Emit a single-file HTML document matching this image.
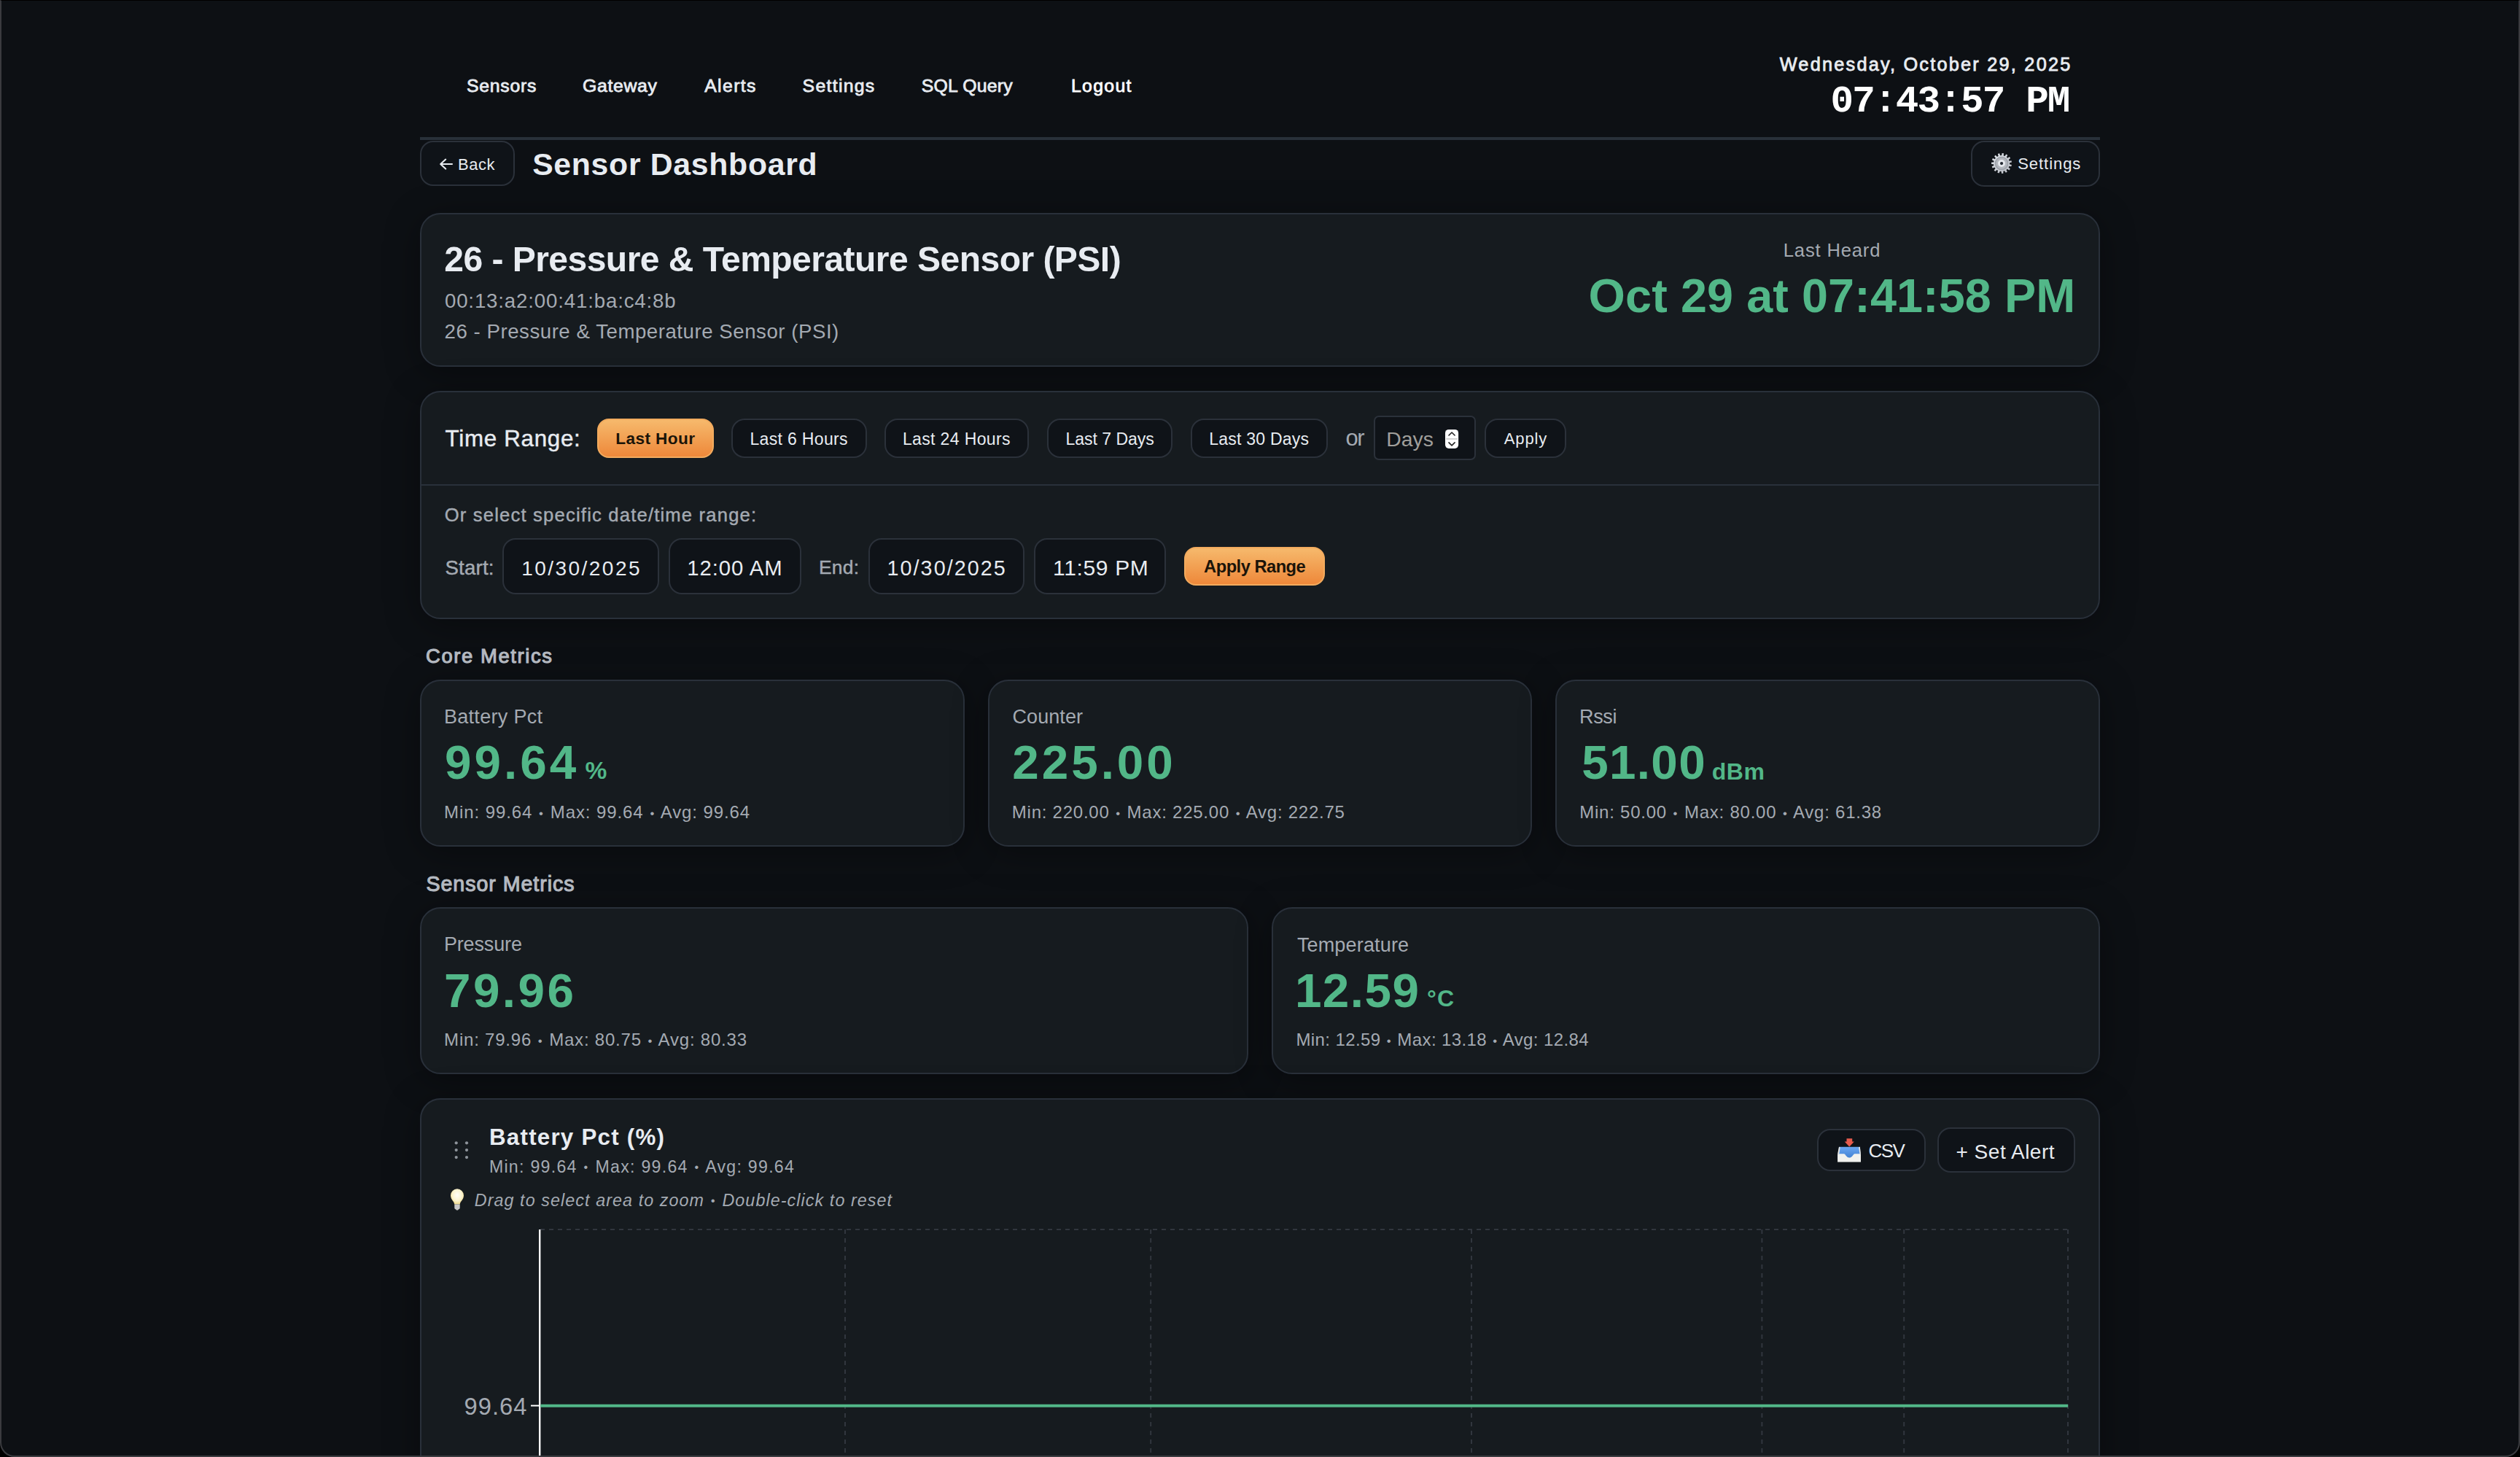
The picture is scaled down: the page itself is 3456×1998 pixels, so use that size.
<!DOCTYPE html>
<html><head><meta charset="utf-8"><title>Sensor Dashboard</title>
<style>
@media (min-width: 2400px) { html { zoom: 2; } }
html, body { margin:0; padding:0; background:#000; }
body { width:1728px; height:999px; overflow:hidden; position:relative; font-family:"Liberation Sans", sans-serif; }
.win { position:absolute; left:0; top:0; width:1728px; height:999px; border-radius:0 0 10px 10px; background:#0d1014; overflow:hidden; }
.frame { position:absolute; left:0; top:0; width:1728px; height:999px; box-sizing:border-box; border:1px solid #3a3b3f; border-top:0.5px solid #000; border-radius:0 0 10px 10px; pointer-events:none; }
.t { position:absolute; line-height:1; white-space:nowrap; }
.card { position:absolute; box-sizing:border-box; background:#161b1f; border:1px solid #29303a; border-radius:14px; box-shadow:0 4px 24px rgba(0,0,0,0.35); }
.btn { position:absolute; box-sizing:border-box; background:#0f1318; border:1px solid #2b313a; border-radius:9px; }
.obtn { position:absolute; box-sizing:border-box; background:linear-gradient(#f6b96c,#ee883a); border:1px solid #f2ab5e; border-radius:8px; }
.inp { position:absolute; box-sizing:border-box; background:#0f1318; border:1px solid #2b313a; border-radius:9px; }
.ab { position:absolute; }
</style></head>
<body><div class="win">
<div class="ab" style="left:288.00px;top:94.00px;width:1152.00px;height:2.00px;background:#283039;"></div>
<div class="btn" style="left:288.00px;top:96.65px;width:64.80px;height:30.70px;"></div>
<div class="btn" style="left:1351.60px;top:96.30px;width:88.30px;height:31.50px;"></div>
<div class="card" style="left:288.00px;top:146.10px;width:1152.00px;height:105.65px;"></div>
<div class="card" style="left:288.00px;top:268.10px;width:1152.00px;height:156.35px;"></div>
<div class="ab" style="left:289.00px;top:332.00px;width:1150.00px;height:1.00px;background:#29303a;"></div>
<div class="obtn" style="left:409.35px;top:287.00px;width:80.35px;height:26.95px;"></div>
<div class="btn" style="left:501.45px;top:287.10px;width:92.85px;height:26.75px;"></div>
<div class="btn" style="left:606.60px;top:287.10px;width:99.15px;height:26.75px;"></div>
<div class="btn" style="left:718.10px;top:287.10px;width:86.05px;height:26.75px;"></div>
<div class="btn" style="left:816.65px;top:287.10px;width:94.05px;height:26.75px;"></div>
<div class="btn" style="left:1018.00px;top:287.10px;width:55.95px;height:26.75px;"></div>
<div class="inp" style="left:942.05px;top:285.15px;width:69.85px;height:30.55px;border-radius:3.5px;"></div>
<div class="inp" style="left:344.65px;top:369.20px;width:107.15px;height:38.50px;"></div>
<div class="inp" style="left:458.25px;top:369.20px;width:91.25px;height:38.50px;"></div>
<div class="inp" style="left:595.25px;top:369.20px;width:107.00px;height:38.50px;"></div>
<div class="inp" style="left:708.90px;top:369.20px;width:90.75px;height:38.50px;"></div>
<div class="obtn" style="left:812.10px;top:375.00px;width:96.20px;height:26.70px;"></div>
<div class="card" style="left:288.00px;top:466.05px;width:373.35px;height:114.60px;"></div>
<div class="card" style="left:677.35px;top:466.05px;width:373.30px;height:114.60px;"></div>
<div class="card" style="left:1066.65px;top:466.05px;width:373.35px;height:114.60px;"></div>
<div class="card" style="left:288.00px;top:622.15px;width:568.00px;height:114.50px;"></div>
<div class="card" style="left:872.00px;top:622.15px;width:568.00px;height:114.50px;"></div>
<div class="card" style="left:288.00px;top:753.10px;width:1152.00px;height:296.90px;"></div>
<div class="btn" style="left:1246.20px;top:773.75px;width:74.20px;height:29.45px;"></div>
<div class="btn" style="left:1328.60px;top:773.10px;width:94.20px;height:30.75px;"></div>
<svg class="ab" style="left:0;top:0;" width="1728" height="999" viewBox="0 0 1728 999"><path d="M302.2 112.5 H310 M305.6 109.3 L302.1 112.5 L305.6 115.8" fill="none" stroke="#e8ecf1" stroke-width="1.05" stroke-linecap="round" stroke-linejoin="round"/><defs><linearGradient id="gg" x1="0" y1="0" x2="1" y2="1"><stop offset="0" stop-color="#dfe4ea"/><stop offset="1" stop-color="#b9bcc4"/></linearGradient><radialGradient id="bulbg" cx="0.5" cy="0.4" r="0.6"><stop offset="0" stop-color="#fffef8"/><stop offset="0.6" stop-color="#fbf3cf"/><stop offset="1" stop-color="#eed98a"/></radialGradient><linearGradient id="trayb" x1="0" y1="0" x2="0" y2="1"><stop offset="0" stop-color="#6aa6f2"/><stop offset="1" stop-color="#3f7fd0"/></linearGradient></defs><polygon points="1372.52,106.52 1372.81,105.03 1373.98,105.17 1373.89,106.69 1374.76,107.00 1375.63,105.75 1376.63,106.36 1375.94,107.71 1376.61,108.34 1377.91,107.56 1378.58,108.52 1377.39,109.47 1377.75,110.32 1379.26,110.14 1379.48,111.29 1378.01,111.67 1377.99,112.59 1379.44,113.04 1379.18,114.18 1377.68,113.94 1377.28,114.77 1378.43,115.77 1377.72,116.70 1376.45,115.87 1375.75,116.47 1376.39,117.85 1375.37,118.41 1374.54,117.13 1373.66,117.40 1373.69,118.92 1372.52,119.02 1372.29,117.52 1371.38,117.40 1370.78,118.80 1369.67,118.41 1370.07,116.95 1369.29,116.47 1368.17,117.51 1367.32,116.70 1368.28,115.53 1367.76,114.77 1366.32,115.26 1365.86,114.18 1367.22,113.50 1367.05,112.59 1365.53,112.46 1365.56,111.29 1367.08,111.22 1367.29,110.32 1365.96,109.58 1366.46,108.52 1367.88,109.07 1368.43,108.34 1367.52,107.12 1368.41,106.36 1369.48,107.44 1370.28,107.00 1369.94,105.51 1371.06,105.17 1371.60,106.60" fill="url(#gg)"/><circle cx="1372.52" cy="112.02" r="4.7" fill="#9ca1a9"/><circle cx="1372.52" cy="112.02" r="3.9" fill="#b3b7be"/><circle cx="1372.52" cy="112.02" r="2.5" fill="#e6e9ee"/><circle cx="1372.52" cy="112.02" r="1.05" fill="#222831"/><rect x="991" y="294.45" width="9.05" height="13" rx="2.4" fill="#ffffff"/><rect x="991.6" y="300.5" width="7.9" height="0.9" fill="#d0d0d0"/><path d="M993.5 298.5 L995.52 296.5 L997.55 298.5 M993.5 303.45 L995.52 305.45 L997.55 303.45" fill="none" stroke="#222" stroke-width="0.8" stroke-linecap="round" stroke-linejoin="round"/><circle cx="312.85" cy="783.65" r="1.05" fill="#8e949b"/><circle cx="312.85" cy="788.55" r="1.05" fill="#8e949b"/><circle cx="312.85" cy="793.55" r="1.05" fill="#8e949b"/><circle cx="320.0" cy="783.65" r="1.05" fill="#8e949b"/><circle cx="320.0" cy="788.55" r="1.05" fill="#8e949b"/><circle cx="320.0" cy="793.55" r="1.05" fill="#8e949b"/><g transform="translate(303 812) scale(0.5)"><path d="M17.2 27.6 C17.2 23.8 12.0 21.2 12.0 15.3 A9 9 0 1 1 30.0 15.3 C30.0 21.2 24.8 23.8 24.8 27.6 Z" fill="url(#bulbg)"/><path d="M17.3 27.4 H24.7 V32.6 Q24.7 34.2 22.8 34.4 L22 35.4 H20 L19.2 34.4 Q17.3 34.2 17.3 32.6 Z" fill="#c8c8c8"/></g><g transform="translate(1255 775) scale(0.5)"><path d="M22.5 11.3 H30.2 V15.6 H32.8 L26.25 22.4 L19.7 15.6 H22.5 Z" fill="#e65a4c"/><path d="M12 22.8 H40.8 L42 39 H10.1 Z" fill="url(#trayb)"/><path d="M12 22.8 L13.7 23.3 L12.3 32.3 H10.1 Z M40.8 22.8 L39.1 23.3 L40.5 32.3 H42 Z" fill="#e9e9e6"/><path d="M10.1 32.3 H18.9 C21 32.3 22 37.6 26.25 37.6 C30.5 37.6 31.5 32.3 33.6 32.3 H42 V43.4 H10.1 Z" fill="#f1f1ee"/></g><path d="M370.5 843 H1418" stroke="#31363e" stroke-width="1" stroke-dasharray="3 3" fill="none"/><path d="M579.5 843 V1000" stroke="#31363e" stroke-width="1" stroke-dasharray="3 3" fill="none"/><path d="M789.1 843 V1000" stroke="#31363e" stroke-width="1" stroke-dasharray="3 3" fill="none"/><path d="M1009 843 V1000" stroke="#31363e" stroke-width="1" stroke-dasharray="3 3" fill="none"/><path d="M1208.2 843 V1000" stroke="#31363e" stroke-width="1" stroke-dasharray="3 3" fill="none"/><path d="M1305.6 843 V1000" stroke="#31363e" stroke-width="1" stroke-dasharray="3 3" fill="none"/><path d="M1418 843 V1000" stroke="#31363e" stroke-width="1" stroke-dasharray="3 3" fill="none"/><path d="M370.1 843 V1000" stroke="#ffffff" stroke-width="1.2" fill="none"/><path d="M364 963.8 H370" stroke="#ffffff" stroke-width="1" fill="none"/><path d="M370.6 963.9 H1418" stroke="#52b788" stroke-width="2" fill="none"/></svg>
<div class="t" style="left:320.01px;top:53.13px;font-size:12.40px;font-weight:400;color:#e8ecf1;letter-spacing:0.373px;-webkit-text-stroke:0.4px currentColor;">Sensors</div>
<div class="t" style="left:399.52px;top:53.13px;font-size:12.40px;font-weight:400;color:#e8ecf1;letter-spacing:0.325px;-webkit-text-stroke:0.4px currentColor;">Gateway</div>
<div class="t" style="left:483.10px;top:53.13px;font-size:12.40px;font-weight:400;color:#e8ecf1;letter-spacing:0.688px;-webkit-text-stroke:0.4px currentColor;">Alerts</div>
<div class="t" style="left:550.31px;top:53.13px;font-size:12.40px;font-weight:400;color:#e8ecf1;letter-spacing:0.646px;-webkit-text-stroke:0.4px currentColor;">Settings</div>
<div class="t" style="left:631.86px;top:53.13px;font-size:12.40px;font-weight:400;color:#e8ecf1;letter-spacing:0.108px;-webkit-text-stroke:0.4px currentColor;">SQL Query</div>
<div class="t" style="left:734.48px;top:53.13px;font-size:12.40px;font-weight:400;color:#ffffff;letter-spacing:0.670px;-webkit-text-stroke:0.4px currentColor;">Logout</div>
<div class="t" style="left:1220.35px;top:37.88px;font-size:12.66px;font-weight:400;color:#e8ecf1;letter-spacing:1.108px;-webkit-text-stroke:0.4px currentColor;">Wednesday, October 29, 2025</div>
<div class="t" style="left:1255.27px;top:56.61px;font-size:26.30px;font-weight:700;color:#ffffff;letter-spacing:-0.914px;font-family:'Liberation Mono',monospace;">07:43:57 PM</div>
<div class="t" style="left:313.99px;top:107.62px;font-size:10.96px;font-weight:400;color:#e8ecf1;letter-spacing:0.305px;">Back</div>
<div class="t" style="left:365.07px;top:102.04px;font-size:21.38px;font-weight:700;color:#e8ecf1;letter-spacing:0.348px;">Sensor Dashboard</div>
<div class="t" style="left:1383.61px;top:106.92px;font-size:11.03px;font-weight:400;color:#e8ecf1;letter-spacing:0.462px;">Settings</div>
<div class="t" style="left:304.65px;top:165.64px;font-size:24.03px;font-weight:700;color:#e8ecf1;letter-spacing:-0.274px;">26 - Pressure &amp; Temperature Sensor (PSI)</div>
<div class="t" style="left:304.97px;top:199.56px;font-size:13.82px;font-weight:400;color:#a4aab2;letter-spacing:0.425px;">00:13:a2:00:41:ba:c4:8b</div>
<div class="t" style="left:304.75px;top:220.43px;font-size:13.82px;font-weight:400;color:#a4aab2;letter-spacing:0.267px;">26 - Pressure &amp; Temperature Sensor (PSI)</div>
<div class="t" style="left:1222.90px;top:165.55px;font-size:12.80px;font-weight:400;color:#a4aab2;letter-spacing:0.412px;">Last Heard</div>
<div class="t" style="left:1089.29px;top:187.01px;font-size:32.36px;font-weight:700;color:#52b788;letter-spacing:0.054px;">Oct 29 at 07:41:58 PM</div>
<div class="t" style="left:305.31px;top:293.10px;font-size:15.66px;font-weight:400;color:#e8ecf1;letter-spacing:0.350px;-webkit-text-stroke:0.22px currentColor;">Time Range:</div>
<div class="t" style="left:422.14px;top:295.43px;font-size:11.31px;font-weight:700;color:#1b1409;letter-spacing:0.200px;">Last Hour</div>
<div class="t" style="left:514.20px;top:295.51px;font-size:11.52px;font-weight:400;color:#e8ecf1;letter-spacing:0.163px;">Last 6 Hours</div>
<div class="t" style="left:618.95px;top:295.51px;font-size:11.52px;font-weight:400;color:#e8ecf1;letter-spacing:0.178px;">Last 24 Hours</div>
<div class="t" style="left:730.70px;top:295.51px;font-size:11.52px;font-weight:400;color:#e8ecf1;letter-spacing:-0.007px;">Last 7 Days</div>
<div class="t" style="left:829.10px;top:295.51px;font-size:11.52px;font-weight:400;color:#e8ecf1;letter-spacing:0.111px;">Last 30 Days</div>
<div class="t" style="left:922.77px;top:293.17px;font-size:15.44px;font-weight:400;color:#a4aab2;letter-spacing:-0.717px;">or</div>
<div class="t" style="left:950.64px;top:293.90px;font-size:14.15px;font-weight:400;color:#a09f9b;letter-spacing:0.036px;">Days</div>
<div class="t" style="left:1031.35px;top:295.66px;font-size:11.03px;font-weight:400;color:#e8ecf1;letter-spacing:0.440px;">Apply</div>
<div class="t" style="left:304.85px;top:347.15px;font-size:12.80px;font-weight:400;color:#a4aab2;letter-spacing:0.596px;-webkit-text-stroke:0.22px currentColor;">Or select specific date/time range:</div>
<div class="t" style="left:305.22px;top:382.33px;font-size:13.80px;font-weight:400;color:#a4aab2;letter-spacing:0.112px;-webkit-text-stroke:0.22px currentColor;">Start:</div>
<div class="t" style="left:357.67px;top:382.78px;font-size:14.03px;font-weight:400;color:#e8ecf1;letter-spacing:1.211px;">10/30/2025</div>
<div class="t" style="left:471.18px;top:381.85px;font-size:14.65px;font-weight:400;color:#e8ecf1;letter-spacing:0.457px;">12:00 AM</div>
<div class="t" style="left:561.47px;top:382.43px;font-size:13.21px;font-weight:400;color:#a4aab2;letter-spacing:0.151px;-webkit-text-stroke:0.22px currentColor;">End:</div>
<div class="t" style="left:608.30px;top:382.35px;font-size:14.37px;font-weight:400;color:#e8ecf1;letter-spacing:1.014px;">10/30/2025</div>
<div class="t" style="left:722.06px;top:381.81px;font-size:15.00px;font-weight:400;color:#e8ecf1;letter-spacing:0.320px;">11:59 PM</div>
<div class="t" style="left:825.56px;top:383.13px;font-size:11.85px;font-weight:700;color:#1b1409;letter-spacing:-0.258px;">Apply Range</div>
<div class="t" style="left:292.06px;top:443.15px;font-size:13.69px;font-weight:400;color:#b4b9c0;letter-spacing:0.801px;-webkit-text-stroke:0.55px currentColor;">Core Metrics</div>
<div class="t" style="left:304.45px;top:485.22px;font-size:13.50px;font-weight:400;color:#a4aab2;letter-spacing:0.159px;">Battery Pct</div>
<div class="t" style="left:304.98px;top:506.62px;font-size:32.80px;font-weight:700;color:#52b788;letter-spacing:2.009px;">99.64</div>
<div class="t" style="left:401.24px;top:520.17px;font-size:16.80px;font-weight:700;color:#52b788;">%</div>
<div class="t" style="left:304.56px;top:551.09px;font-size:12.00px;font-weight:400;color:#a4aab2;letter-spacing:0.455px;">Min: 99.64 <span style="font-size:0.7em;vertical-align:0.086em;padding-left:0.074em;letter-spacing:calc(0.455px + 0.076em);">•</span> Max: 99.64 <span style="font-size:0.7em;vertical-align:0.086em;padding-left:0.074em;letter-spacing:calc(0.455px + 0.076em);">•</span> Avg: 99.64</div>
<div class="t" style="left:694.22px;top:485.09px;font-size:13.50px;font-weight:400;color:#a4aab2;letter-spacing:0.045px;">Counter</div>
<div class="t" style="left:694.12px;top:506.61px;font-size:32.80px;font-weight:700;color:#52b788;letter-spacing:1.996px;">225.00</div>
<div class="t" style="left:693.91px;top:551.10px;font-size:12.00px;font-weight:400;color:#a4aab2;letter-spacing:0.379px;">Min: 220.00 <span style="font-size:0.7em;vertical-align:0.086em;padding-left:0.074em;letter-spacing:calc(0.379px + 0.076em);">•</span> Max: 225.00 <span style="font-size:0.7em;vertical-align:0.086em;padding-left:0.074em;letter-spacing:calc(0.379px + 0.076em);">•</span> Avg: 222.75</div>
<div class="t" style="left:1083.00px;top:485.09px;font-size:13.50px;font-weight:400;color:#a4aab2;letter-spacing:-0.168px;">Rssi</div>
<div class="t" style="left:1084.64px;top:506.61px;font-size:32.80px;font-weight:700;color:#52b788;letter-spacing:0.653px;">51.00</div>
<div class="t" style="left:1173.85px;top:521.24px;font-size:16.00px;font-weight:700;color:#52b788;letter-spacing:0.261px;">dBm</div>
<div class="t" style="left:1083.11px;top:551.10px;font-size:12.00px;font-weight:400;color:#a4aab2;letter-spacing:0.381px;">Min: 50.00 <span style="font-size:0.7em;vertical-align:0.086em;padding-left:0.074em;letter-spacing:calc(0.381px + 0.076em);">•</span> Max: 80.00 <span style="font-size:0.7em;vertical-align:0.086em;padding-left:0.074em;letter-spacing:calc(0.381px + 0.076em);">•</span> Avg: 61.38</div>
<div class="t" style="left:292.25px;top:599.14px;font-size:14.30px;font-weight:400;color:#b4b9c0;letter-spacing:0.473px;-webkit-text-stroke:0.55px currentColor;">Sensor Metrics</div>
<div class="t" style="left:304.45px;top:640.97px;font-size:13.50px;font-weight:400;color:#a4aab2;letter-spacing:-0.074px;">Pressure</div>
<div class="t" style="left:304.48px;top:662.88px;font-size:32.80px;font-weight:700;color:#52b788;letter-spacing:1.740px;">79.96</div>
<div class="t" style="left:304.56px;top:707.23px;font-size:12.00px;font-weight:400;color:#a4aab2;letter-spacing:0.395px;">Min: 79.96 <span style="font-size:0.7em;vertical-align:0.086em;padding-left:0.074em;letter-spacing:calc(0.395px + 0.076em);">•</span> Max: 80.75 <span style="font-size:0.7em;vertical-align:0.086em;padding-left:0.074em;letter-spacing:calc(0.395px + 0.076em);">•</span> Avg: 80.33</div>
<div class="t" style="left:889.44px;top:641.36px;font-size:13.50px;font-weight:400;color:#a4aab2;letter-spacing:0.082px;">Temperature</div>
<div class="t" style="left:887.95px;top:662.88px;font-size:32.80px;font-weight:700;color:#52b788;letter-spacing:0.734px;">12.59</div>
<div class="t" style="left:978.45px;top:676.71px;font-size:16.00px;font-weight:700;color:#52b788;letter-spacing:0.702px;">°C</div>
<div class="t" style="left:888.71px;top:707.23px;font-size:12.00px;font-weight:400;color:#a4aab2;letter-spacing:0.198px;">Min: 12.59 <span style="font-size:0.7em;vertical-align:0.086em;padding-left:0.074em;letter-spacing:calc(0.198px + 0.076em);">•</span> Max: 13.18 <span style="font-size:0.7em;vertical-align:0.086em;padding-left:0.074em;letter-spacing:calc(0.198px + 0.076em);">•</span> Avg: 12.84</div>
<div class="t" style="left:335.52px;top:771.99px;font-size:15.66px;font-weight:700;color:#e8ecf1;letter-spacing:0.612px;">Battery Pct (%)</div>
<div class="t" style="left:335.45px;top:794.33px;font-size:11.57px;font-weight:400;color:#a4aab2;letter-spacing:0.640px;">Min: 99.64 <span style="font-size:0.7em;vertical-align:0.086em;padding-left:0.074em;letter-spacing:calc(0.640px + 0.076em);">•</span> Max: 99.64 <span style="font-size:0.7em;vertical-align:0.086em;padding-left:0.074em;letter-spacing:calc(0.640px + 0.076em);">•</span> Avg: 99.64</div>
<div class="t" style="left:325.37px;top:817.28px;font-size:11.64px;font-weight:400;color:#a4aab2;letter-spacing:0.547px;font-style:italic;">Drag to select area to zoom <span style="font-size:0.7em;vertical-align:0.086em;padding-left:0.074em;letter-spacing:calc(0.547px + 0.076em);">•</span> Double-click to reset</div>
<div class="t" style="left:1281.29px;top:782.47px;font-size:13.01px;font-weight:400;color:#e8ecf1;letter-spacing:-0.805px;">CSV</div>
<div class="t" style="left:1341.19px;top:782.78px;font-size:14.03px;font-weight:400;color:#e8ecf1;letter-spacing:0.253px;">+ Set Alert</div>
<div class="t" style="left:318.23px;top:956.56px;font-size:16.36px;font-weight:400;color:#a4aab2;letter-spacing:0.524px;">99.64</div>

</div><div class="frame"></div></body></html>
